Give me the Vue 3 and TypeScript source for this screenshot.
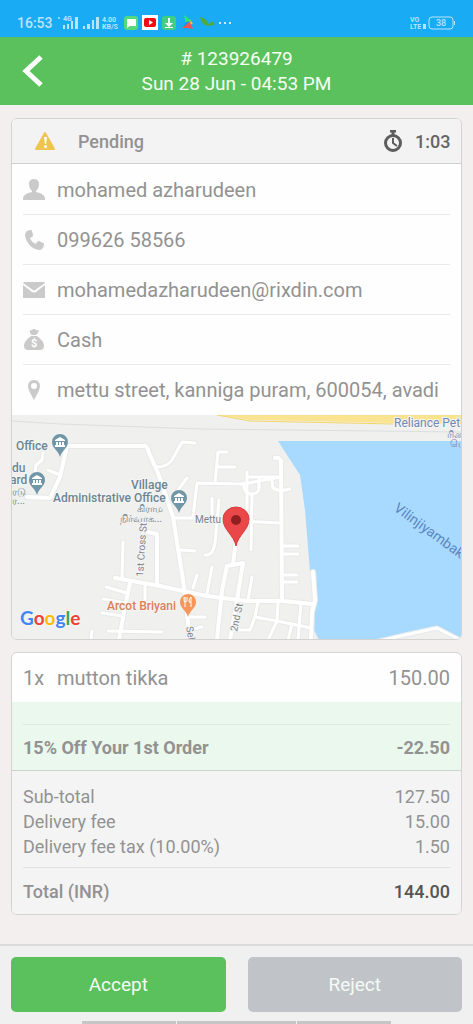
<script setup lang="ts">
type IconName = 'user' | 'phone' | 'mail' | 'cash' | 'pin'

interface Detail {
  icon: IconName
  text: string
}

interface Amount {
  label: string
  value: string
}

const details: Detail[] = [
  { icon: 'user', text: 'mohamed azharudeen' },
  { icon: 'phone', text: '099626 58566' },
  { icon: 'mail', text: 'mohamedazharudeen@rixdin.com' },
  { icon: 'cash', text: 'Cash' },
  { icon: 'pin', text: 'mettu street, kanniga puram, 600054, avadi' },
]

const amounts: Amount[] = [
  { label: 'Sub-total', value: '127.50' },
  { label: 'Delivery fee', value: '15.00' },
  { label: 'Delivery fee tax (10.00%)', value: '1.50' },
]

const mainRoads: string[] = [
  'M67 446H143Q147 444 149 453L158 473L173 517L183 580L190 640',
  'M67 446L60 477L50 498L27 497',
  'M115 578L160 586L183 591L207 596L247 601L283 601L312 604',
  'M275 458Q281 457 281 463L282 601',
  'M157 585V534L147 532',
  'M130 583L125 607L119 640',
  'M227 566L222 590L217 640',
  'M236 540L233 564M227 566L243 563L237 600L230 640',
  'M313 572L315 600L312 612L311 640',
]

const smallRoads: string[] = [
  'M193 517L197 483L243 484L281 477',
  'M174 518H200L240 521L281 523',
  'M195 443L182 442L172 460Q167 467 157 467',
  'M227 452H218L215 483M217 467H235',
  'M187 478L178 490',
  'M43 453L42 460L36 465L35 472M48 470L60 475',
  'M247 472V510M252 495L251 550M248 477H281M259 477V490M271 477L273 488L280 491L290 489',
  'M244 483Q243 494 252 494Q260 494 259 484',
  'M212 498V515M219 500L215 543Q213 556 205 555',
  'M181 550L195 551',
  'M123 542L122 578M145 585V599',
  'M106 587L127 593M103 599L125 603M102 613L123 616M108 631L162 632M92 631L91 640',
  'M197 575L193 588M212 567L207 594M252 577L248 600',
  'M282 546H298M282 554H298M282 575H297M282 582H297',
  'M258 602L255 617L250 630H232M255 617L277 621L311 628M278 602L277 621L268 640',
  'M292 624L288 640M301 603L298 640M188 617H205M192 629L202 627',
  'M375 642L405 635L437 628L462 641',
]
</script>

<template>
  <div class="screen">
    <div class="status">
      <span class="clock">16:53</span>
      <svg class="signal" viewBox="0 0 62 16" aria-hidden="true">
        <circle cx="2" cy="3" r="1" />
        <text class="tiny" x="6" y="6">4G</text>
        <path d="M6 10h2v4H6zM10 9h2v5h-2zM14 6h2v8h-2zM18 2h3v12h-3zM26 11h2v3h-2zM30 9h3v5h-3zM35 5h2v9h-2zM39 2h3v12h-3z" />
        <text class="rate" x="45" y="7">4.00</text>
        <text class="rate" x="45" y="14">KB/S</text>
      </svg>
      <svg class="apps" viewBox="0 0 110 16" aria-hidden="true">
        <rect x="1" y="1" width="14" height="14" rx="3" fill="#55d77c" />
        <path d="M4 4h9v7H7l-3 2z" fill="#fff" />
        <rect x="19" width="16" height="15" fill="#fff" />
        <rect x="21" y="3" width="12" height="9" rx="2" fill="#f20d12" />
        <path d="M26 5l4 2.500-4 2.500z" fill="#fff" />
        <rect x="39" y="1" width="14" height="14" rx="3" fill="#43cc82" />
        <path d="M45 3h2v5h3l-4 4-4-4h3zM42 12h8v1h-8z" fill="#fff" />
        <path d="M61 0l8 6-6 5z" fill="#2be275" />
        <path d="M67 5l3 4-7 1z" fill="#ffca28" />
        <path d="M63 7l5-1-8 7z" fill="#2787e8" />
        <path d="M59 13l8-6 3 7-6-1z" fill="#f05350" />
        <path d="M77 2q7 1 9 9-7 0-9-9zM85 10q4-6 6-2 0 4-6 2z" fill="#55a936" />
        <path d="M96 7h2v2h-2zM101 7h2v2h-2zM106 7h2v2h-2z" fill="#c7eaff" />
      </svg>
      <svg class="power" viewBox="0 0 48 16" aria-hidden="true">
        <text class="volte" x="1" y="7">VO</text>
        <text class="volte" x="1" y="14">LTE</text>
        <rect x="14" y="9" width="3" height="5" fill="#b9e4fd" />
        <rect x="20" y="2" width="24" height="12" rx="3" fill="none" stroke="#b9e4fd" />
        <path d="M45 6h1v4h-1z" fill="#b9e4fd" />
        <text class="level" x="27" y="11">38</text>
      </svg>
    </div>

    <header class="top">
      <button class="back" type="button" aria-label="Back">
        <svg viewBox="0 0 22 34" aria-hidden="true"><path d="M19 3L4 17l15 14" /></svg>
      </button>
      <h1 class="heading">
        <span># 123926479</span>
        <span>Sun 28 Jun - 04:53 PM</span>
      </h1>
    </header>

    <main class="content">
      <section class="card">
        <div class="state">
          <svg class="warn" viewBox="0 0 22 20" aria-hidden="true">
            <path d="M11 2L20 18H2z" fill="#efc550" stroke="#efc550" stroke-width="2" stroke-linejoin="round" />
            <path d="M10 6h3l-1 7h-1z" fill="#fff" />
            <circle cx="11.500" cy="15.500" r="1.500" fill="#fff" />
          </svg>
          <span class="pending">Pending</span>
          <svg class="timer" viewBox="0 0 20 22" aria-hidden="true">
            <circle cx="10" cy="13" r="7.500" />
            <path class="crown" d="M7 1h6M10 1v4" />
            <path class="hands" d="M10 8v5l4 3" />
          </svg>
          <span class="remaining">1:03</span>
        </div>

        <ul class="details">
          <li v-for="item in details" :key="item.icon" class="detail">
            <svg class="glyph" viewBox="0 0 22 22" aria-hidden="true">
              <path v-if="item.icon === 'user'" d="M11 0C7 0 6 3 6 5c0 3 1 5 3 7v1c-5 1-9 3-9 7v1h22v-1c0-4-4-6-9-7v-1c2-2 3-4 3-7 0-2-1-5-5-5z" />
              <path v-else-if="item.icon === 'phone'" d="M4 2l3-1c1 0 2 0 2 1l1 4c0 1 0 1-1 2L7 9c1 3 3 5 6 6l1-2c1-1 1-1 2-1l4 2c1 0 1 1 1 2l-1 3c-1 1-2 2-4 2C8 20 3 13 2 6c0-2 1-3 2-4z" />
              <path v-else-if="item.icon === 'mail'" d="M1 3h20l1 1-10 7q-1 1-2 0L0 4zM0 6l9 7q2 1 4 0l9-7v13H0z" />
              <template v-else-if="item.icon === 'cash'">
                <path d="M7 1q2 1 3-1h2q1 2 4 1-1 4-3 5H9Q6 4 7 1zM8 7h6c4 3 7 6 7 10 0 3-2 4-4 4H5c-2 0-4-1-4-4 0-4 3-7 7-10z" />
                <text class="dollar" x="8" y="18">$</text>
              </template>
              <path v-else fill-rule="evenodd" d="M11 1c-4 0-6 3-6 6 0 4 4 10 6 14 2-4 6-10 6-14 0-3-2-6-6-6zM11 4a3 3 0 1 1 0 6 3 3 0 0 1 0-6z" />
            </svg>
            <span>{{ item.text }}</span>
          </li>
        </ul>

        <svg class="map" viewBox="12 415 449 224" role="img" aria-label="Map of the delivery address">
          <rect x="12" y="415" width="449" height="224" fill="#f0f0ee" />
          <path d="M12 421L60 424L200 429L461 432" fill="none" stroke="#dcdedf" />
          <path d="M217 415L250 420L393 423L461 424V415z" fill="#fbe491" />
          <path d="M217 415L250 421L393 424" fill="none" stroke="#f3d56e" />
          <path d="M278 441H461V640H319L314 630V613L317 600L316 572H310L305 510L300 475Z" fill="#a8daff" />
          <path d="M375 640L405 634L437 627L461 639z" fill="#f0f0ee" />
          <g class="roads">
            <path v-for="road in smallRoads" :key="road" class="edge" :d="road" />
            <path v-for="road in mainRoads" :key="road" class="edge wide" :d="road" />
            <path v-for="road in smallRoads" :key="road" :d="road" />
            <path v-for="road in mainRoads" :key="road" class="wide" :d="road" />
          </g>

          <g class="places">
            <text x="16" y="450">Office</text>
            <text x="12" y="472">du</text>
            <text x="10" y="484">ard</text>
            <text class="tamil" x="12" y="495">ரடு</text>
            <text class="tamil" x="12" y="504">ர...</text>
            <text x="131" y="489">Village</text>
            <text x="53" y="502">Administrative Office</text>
            <text class="tamil" x="137" y="512">கிராம</text>
            <text class="tamil" x="120" y="522">நிர்வாக...</text>
          </g>
          <g class="streets">
            <text x="195" y="523">Mettu St</text>
            <text transform="translate(143 577) rotate(-86)">1st Cross St</text>
            <text transform="translate(237 632) rotate(-78)">2nd St</text>
            <text transform="translate(186 627) rotate(80)">Sel</text>
          </g>
          <text class="food" x="107" y="610">Arcot Briyani</text>
          <g class="station">
            <text x="394" y="427">Reliance Pet</text>
            <text class="tamil" x="447" y="438">ரிலை</text>
            <text class="tamil" x="450" y="447">பெ</text>
          </g>
          <text class="lake" transform="translate(393 510) rotate(36)">Vilinjiyambakkam</text>

          <g v-for="spot in [[60, 442], [37, 480], [179, 498]]" :key="spot[0]" :transform="`translate(${spot[0]} ${spot[1]})`">
            <path d="M0 15C-2 8-8 6-8 0a8 8 0 0 1 16 0C8 6 2 8 0 15z" fill="#7196a7" />
            <path d="M-5-2L0-5l5 3v1H-5zM-4 0h2v3h-2zM-1 0h2v3h-2zM2 0h2v3H2zM-5 3H5v2H-5z" fill="#fff" />
          </g>
          <g transform="translate(188 602)">
            <path d="M0 15C-2 8-8 6-8 0a8 8 0 0 1 16 0C8 6 2 8 0 15z" fill="#f7965a" />
            <path d="M-4-5v4l1 1v5M-1-5v4l-2 1M-3-5v4M3 5v-10Q1-4 1 0h2" fill="none" stroke="#fff" />
          </g>
          <path d="M236 546C234 535 223 530 223 519a13 12 0 0 1 26 0C249 530 238 535 236 546z" fill="#ea4848" stroke="#d73a3d" />
          <circle cx="236" cy="520" r="5" fill="#901f20" />
          <text class="google" x="20" y="625"><tspan fill="#4285f4">G</tspan><tspan fill="#ea4335">o</tspan><tspan fill="#fbbc05">o</tspan><tspan fill="#4285f4">g</tspan><tspan fill="#34a853">l</tspan><tspan fill="#ea4335">e</tspan></text>
        </svg>
      </section>

      <section class="card">
        <div class="item">
          <span class="count">1x</span>
          <span class="name">mutton tikka</span>
          <span>150.00</span>
        </div>
        <div class="offer">
          <div class="discount">
            <span>15% Off Your 1st Order</span>
            <span>-22.50</span>
          </div>
        </div>
        <div class="totals">
          <div v-for="row in amounts" :key="row.label" class="amount">
            <span>{{ row.label }}</span>
            <span>{{ row.value }}</span>
          </div>
          <div class="grand">
            <span>Total (INR)</span>
            <strong>144.00</strong>
          </div>
        </div>
      </section>
    </main>

    <footer class="actions">
      <div class="buttons">
        <button class="accept" type="button">Accept</button>
        <button class="reject" type="button">Reject</button>
      </div>
      <div class="gestures"><i></i><i></i><i></i></div>
    </footer>
  </div>
</template>

<style>
body {
  background: #f2efee;
}
</style>

<style scoped>
.screen {
  display: flex;
  flex-direction: column;
  min-height: 100vh;
  font-family: Roboto, 'Noto Sans', sans-serif;
  color: #929292;
  background: #f2efee;
}

.status {
  display: flex;
  align-items: center;
  box-sizing: border-box;
  height: 37px;
  padding: 8px 16px 0 17px;
  background: #1aabf5;
}

.clock {
  width: 40px;
  font-size: 14px;
  font-weight: 500;
  color: #b9e4fd;
}

.signal {
  width: 62px;
  height: 16px;
  fill: #b9e4fd;
}

.apps {
  width: 110px;
  height: 16px;
  margin-left: 4px;
}

.power {
  width: 48px;
  height: 16px;
  margin-left: auto;
}

.tiny,
.rate,
.volte {
  font-size: 7px;
  font-weight: 700;
  fill: #b9e4fd;
}

.level {
  font-size: 9px;
  font-weight: 500;
  fill: #b9e4fd;
}

.top {
  display: grid;
  grid-template-columns: 60px 1fr 60px;
  align-items: center;
  height: 68px;
  color: #f5fff3;
  background: #5bc15d;
}

.back {
  display: flex;
  justify-content: flex-end;
  padding: 0 16px 0 0;
  border: 0;
  background: none;
}

.back svg {
  width: 22px;
  height: 34px;
  fill: none;
  stroke: #fff;
  stroke-width: 5;
}

.heading {
  display: flex;
  flex-direction: column;
  margin: 0;
  font-size: 19px;
  font-weight: 400;
  line-height: 25px;
  text-align: center;
}

.content {
  display: flex;
  flex-direction: column;
  gap: 12px;
  padding: 13px 11px 28px;
}

.card {
  overflow: hidden;
  border: 1px solid #d2d3d2;
  border-radius: 6px;
  background: #fefefe;
}

.state {
  display: flex;
  align-items: center;
  height: 44px;
  padding: 0 11px 0 22px;
  border-bottom: 1px solid #cfcfcf;
  font-size: 18px;
  font-weight: 500;
  background: #f3f3f3;
}

.warn {
  width: 22px;
  height: 20px;
}

.pending {
  margin-left: 22px;
}

.timer {
  width: 20px;
  height: 22px;
  margin-left: auto;
  fill: none;
  stroke: #5d5d5d;
  stroke-width: 3;
}

.timer .hands {
  stroke-width: 2;
}

.remaining {
  width: 35px;
  margin-left: 12px;
  text-align: right;
  color: #656565;
}

.details {
  margin: 0;
  padding: 0 11px 1px;
  list-style: none;
}

.detail {
  display: flex;
  align-items: center;
  gap: 12px;
  box-sizing: border-box;
  height: 50px;
  padding-top: 1px;
  font-size: 20px;
  white-space: nowrap;
}

.detail + .detail {
  border-top: 1px solid #e9e9e9;
}

.glyph {
  flex: none;
  width: 22px;
  height: 22px;
  fill: #cacaca;
}

.dollar {
  font-size: 11px;
  font-weight: 700;
  fill: #fff;
}

.map {
  display: block;
  width: 100%;
}

.roads path {
  fill: none;
  stroke: #fff;
  stroke-width: 3;
  stroke-linecap: round;
  stroke-linejoin: round;
}

.roads .wide {
  stroke-width: 4;
}

.roads .edge {
  stroke: #e8e9e9;
  stroke-width: 5;
}

.roads .edge.wide {
  stroke-width: 6;
}

.map text {
  paint-order: stroke;
  stroke: #f5f5f4;
  stroke-width: 2px;
}

.places text {
  font-size: 12px;
  font-weight: 500;
  fill: #6c8592;
}

.map .tamil {
  font-size: 10px;
  font-weight: 400;
  stroke: none;
}

.streets text {
  font-size: 10px;
  fill: #7d8388;
}

.food {
  font-size: 12px;
  font-weight: 500;
  fill: #d9805a;
}

.station text {
  font-size: 12px;
  fill: #7188b1;
}

.map .lake {
  font-size: 14px;
  fill: #5c87bf;
  stroke: none;
}

.google {
  font-family: Lato, sans-serif;
  font-size: 19px;
  font-weight: 700;
}

.item {
  display: flex;
  align-items: center;
  height: 49px;
  padding: 0 11px;
  font-size: 20px;
}

.count {
  width: 34px;
}

.name {
  flex: 1;
}

.offer {
  padding: 22px 11px 0;
  border-bottom: 1px solid #cbd5cb;
  background: #eaf8ed;
}

.discount {
  display: flex;
  align-items: center;
  justify-content: space-between;
  height: 45px;
  border-top: 1px solid #dce9df;
  font-size: 18px;
  font-weight: 700;
}

.totals {
  padding: 13px 11px 0;
  font-size: 18px;
  line-height: 25px;
  background: #f4f4f4;
}

.amount,
.grand {
  display: flex;
  align-items: center;
  justify-content: space-between;
}

.grand {
  height: 46px;
  margin-top: 8px;
  border-top: 1px solid #e2e2e2;
  font-weight: 500;
}

.grand strong {
  font-weight: 500;
  color: #555;
}

.actions {
  margin-top: auto;
  border-top: 2px solid #dadada;
  background: #f0f0f0;
}

.buttons {
  display: grid;
  grid-template-columns: 1fr 1fr;
  gap: 22px;
  padding: 11px 11px 9px;
}

.buttons button {
  height: 55px;
  border: 0;
  border-radius: 5px;
  font-family: inherit;
  font-size: 19px;
  color: #f4fbf4;
}

.accept {
  background: #5bc15d;
}

.reject {
  background: #c0c4c9;
}

.gestures {
  display: flex;
  justify-content: center;
  gap: 1px;
}

.gestures i {
  width: 20%;
  height: 3px;
  background: #c6c6c6;
}

.gestures i:nth-child(2) {
  width: 25%;
}
</style>
